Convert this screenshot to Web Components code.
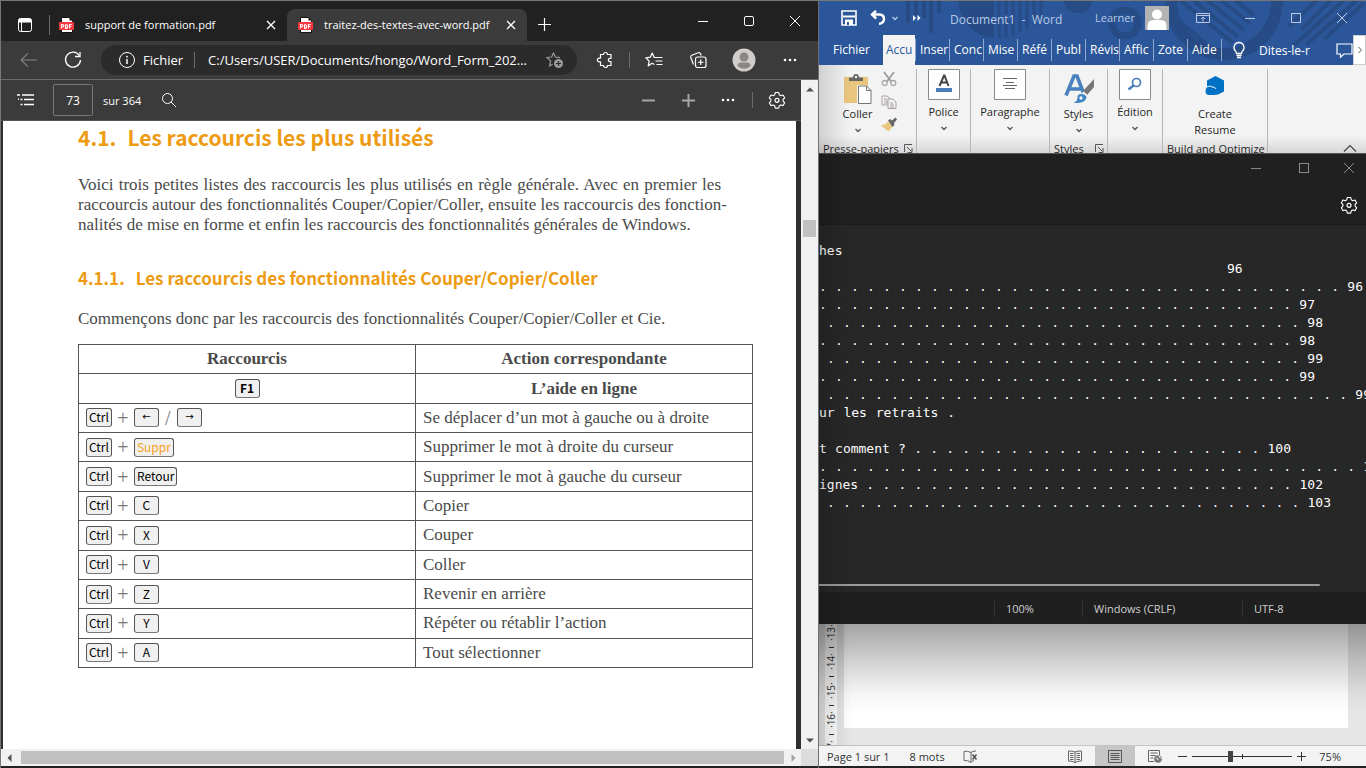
<!DOCTYPE html>
<html lang="fr">
<head>
<meta charset="utf-8">
<title>Bureau</title>
<style>
  body { margin: 0; font-family: "Open Sans", "Noto Sans", sans-serif; font-size: 11px; background: #222; }
</style>
</head>
<body>
<desk-top></desk-top>
<script>
const RESET = `
  * { box-sizing: border-box; }
  button, input { font: inherit; color: inherit; background: none; border: 0; margin: 0; padding: 0; border-radius: 0; }
  button { display: flex; align-items: center; justify-content: center; }
  a { color: inherit; text-decoration: none; }
`;
function define(name, css, html) {
  const template = document.createElement('template');
  template.innerHTML = `<style>${RESET}${css}</style>${html}`;
  customElements.define(name, class extends HTMLElement {
    constructor() {
      super();
      this.attachShadow({ mode: 'open' }).append(template.content.cloneNode(true));
    }
  });
}

/* ---------- icons: name -> [width, height, svg body] ---------- */
const S = 'fill="none" stroke="currentColor"';
const ICONS = {
  tabs: [16, 16, `<rect x="1.5" y="1.5" width="13" height="13" rx="2" ${S}/><path d="M1.500 3a1.500 1.500 0 0 1 1.500-1.500h10a1.500 1.500 0 0 1 1.500 1.500v2.500h-13z" fill="currentColor"/><path d="M4.500 5v9.500" ${S}/>`],
  pdf: [16, 16, `<path d="M2.500.5h8l3 3v12h-11z" fill="#fff" stroke="#111"/><path d="M10.500.5v3h3z" fill="#111"/><rect x="0" y="5" width="15" height="8" rx="1" fill="#f5383f"/><path d="M2.500 11.500v-4h1q1.300 0 1.300 1.200T3.500 10H2.500M6.500 7.500v4q2.200 0 2.200-2T6.500 7.500M10.500 11.500v-4h2.200M10.500 9.500h1.800" fill="none" stroke="#fff" stroke-width="1.100"/>`],
  close: [10, 10, `<path d="M1 1l8 8M9 1l-8 8" ${S} stroke-width="1.300"/>`],
  plus: [15, 15, `<path d="M7.500 1v13M1 7.500h13" ${S} stroke-width="1.200"/>`],
  plusbold: [15, 15, `<path d="M7.500 1v13M1 7.500h13" ${S} stroke-width="2"/>`],
  minusbold: [15, 15, `<path d="M1 7.500h13" ${S} stroke-width="2"/>`],
  min: [12, 12, `<path d="M1 6.500h10" ${S}/>`],
  max: [12, 12, `<rect x="1.500" y="1.500" width="9" height="9" ${S}/>`],
  maxr: [12, 12, `<rect x="1.500" y="1.500" width="9" height="9" rx="1.500" ${S}/>`],
  x: [12, 12, `<path d="M1 1l10 10M11 1L1 11" ${S}/>`],
  back: [18, 16, `<path d="M17 8H1.500M8 1.200L1.200 8 8 14.800" ${S} stroke-width="1.100"/>`],
  refresh: [18, 18, `<path d="M15.300 4.500A7.500 7.500 0 1 0 16.500 9" ${S} stroke-width="1.300"/><path d="M16 1v4.500h-5" ${S} stroke-width="1.300"/>`],
  info: [18, 18, `<circle cx="9" cy="9" r="7.500" ${S}/><path d="M9 8v5" ${S} stroke-width="1.500"/><circle cx="9" cy="5.700" r=".9" fill="currentColor"/>`],
  staradd: [18, 18, `<path d="M7.500 1.800L9.300 6l4.700.6M7.500 1.800L5.700 6 1 6.500l3.600 3.400-1 4.900 3-1.600" ${S} stroke-width="1.200"/><circle cx="12.500" cy="12.500" r="4.500" fill="currentColor"/><path d="M12.500 10v5M10 12.500h5" stroke="#2b2b2b" stroke-width="1.200"/>`],
  puzzle: [18, 18, `<path d="M4.500 3.500h3a2 2 0 0 1 4 0H15v3.800h-1a1.700 1.700 0 0 0 0 3.400h1v3.800h-3.500a2 2 0 0 1-4 0h-3v-3.600H3.300a1.900 1.900 0 0 1 0-3.800h1.200z" ${S} stroke-width="1.200" stroke-linejoin="round"/>`],
  favs: [18, 18, `<path d="M9.500 13.500L7 12.300 3.200 14.900l1-4.800L.8 6.800l4.500-.6L7.200 2l2 4.500h8.300M10.500 10h7M11.500 13.500h6" ${S} stroke-width="1.200" stroke-linejoin="round"/>`],
  collect: [18, 18, `<rect x="6.500" y="6" width="10.500" height="10.500" rx="2" ${S} stroke-width="1.200"/><path d="M11.750 8.500v5.500M9 11.250h5.500M4.500 13.500L1.800 6.500q-.5-1.500 1-2.200l6.500-2.500q1.600-.6 2.200 1L12.300 4.500" ${S} stroke-width="1.200"/>`],
  avatar: [24, 24, `<circle cx="12" cy="12" r="11.500" fill="#cfcdca"/><circle cx="12" cy="9" r="4.500" fill="#8a8785"/><path d="M5.500 18q0-3.500 3.500-3.500h6q3.500 0 3.500 3.500-2.500 2.800-6.500 2.800T5.500 18z" fill="#8a8785"/>`],
  dots: [16, 4, `<circle cx="3" cy="2" r="1.300" fill="currentColor"/><circle cx="8" cy="2" r="1.300" fill="currentColor"/><circle cx="13" cy="2" r="1.300" fill="currentColor"/>`],
  toc: [17, 14, `<path d="M5 2h12M7 6.500h10M7 11.500h10" ${S} stroke-width="1.300"/><path d="M0 2h3M3.500 6.500h2M3.500 11.500h2M1 6h1" ${S} stroke-width="1.600"/>`],
  search: [16, 16, `<circle cx="6.500" cy="6.500" r="5" ${S}/><path d="M10 10l5 5" ${S}/>`],
  gear: [18, 18, `<path d="M7.300 1.500h3.400l.6 2.300 1.500.9 2.300-.7 1.600 2.900-1.600 1.600v1.600l1.600 1.700-1.600 2.800-2.300-.6-1.500.8-.6 2.300H7.300l-.6-2.300-1.500-.8-2.300.6L1.300 11.800l1.600-1.700V8.500L1.300 6.900 2.900 4l2.300.7 1.500-.9z" ${S} stroke-width="1.100" stroke-linejoin="round"/><circle cx="9" cy="9.300" r="2" ${S} stroke-width="1.200"/>`],
  up: [8, 5, `<path d="M0 4.500L4 .5l4 4z" fill="currentColor"/>`],
  down: [8, 5, `<path d="M0 .5l4 4 4-4z" fill="currentColor"/>`],
  left: [5, 8, `<path d="M4.500 0l-4 4 4 4z" fill="currentColor"/>`],
  right: [5, 8, `<path d="M.5 0l4 4-4 4z" fill="currentColor"/>`],
  save: [16, 16, `<path d="M1 1h14v14H1z" fill="none" stroke="#fff" stroke-width="1.600"/><path d="M2 6.500h12" stroke="#fff" stroke-width="2"/><path d="M4 9.500h8V15H4z" fill="#fff"/><path d="M6 12h2v3H6z" fill="#2b579a"/>`],
  undo: [16, 16, `<path d="M2 4.500h7.500q4.500.3 4.500 4.500 0 4-5 5" fill="none" stroke="#fff" stroke-width="2.400"/><path d="M6 .8L2 4.600l4.200 3.900" fill="none" stroke="#fff" stroke-width="2.400"/>`],
  chev: [8, 8, `<path d="M1.500 3L4 5.500 6.500 3" ${S} stroke-width="1.300"/>`],
  more: [8, 6, `<path d="M0 0l3 3-3 3zM4.500 0l3 3-3 3z" fill="#fff"/>`],
  person: [24, 24, `<path d="M0 0h24v24H0z" fill="#b3b3b3"/><circle cx="12" cy="8.500" r="5" fill="#fff"/><path d="M2.500 24v-4q0-6 6-6h7q6 0 6 6v4z" fill="#fff"/>`],
  ribbonopt: [14, 12, `<path d="M.5 1.500h13v9H.5zM.5 3.500h13M7 9.500v-4M5 7l2-2 2 2" ${S}/>`],
  bulb: [14, 18, `<path d="M4.500 12.500q0-1.500-1.500-3A5 5 0 0 1 7 1.500a5 5 0 0 1 4 8q-1.500 1.500-1.500 3zM4.500 14.500h5M5 16.500h4" fill="none" stroke="#fff" stroke-width="1.300"/>`],
  comment: [17, 15, `<path d="M1 1h15v10H8l-3.500 3.200V11H1z" fill="none" stroke="#fff" stroke-width="1.200"/>`],
  next: [6, 8, `<path d="M1.500 1l3 3-3 3" fill="none" stroke="#555"/>`],
  paste: [30, 32, `<path d="M1 4h24v26H1z" fill="#eac57d"/><path d="M6 8V4.500h4Q10 1 13 1t3 3.500h4V8z" fill="#666"/><circle cx="13" cy="4" r="1.200" fill="#f3f3f3"/><path d="M14 12h9l5.500 5.500V32H14z" fill="#f3f3f3"/><path d="M15.500 13h8l4.500 4.500v13H15.500zM23.500 13v4.500H28" fill="#fff" stroke="#767676"/>`],
  cut: [16, 16, `<path d="M3 1l7.500 10M13 1L5.500 11" stroke="#999" stroke-width="1.700"/><circle cx="3.700" cy="12" r="2.500" fill="none" stroke="#aaa" stroke-width="1.300"/><circle cx="12.300" cy="12" r="2.500" fill="none" stroke="#aaa" stroke-width="1.300"/>`],
  copy: [16, 14, `<path d="M1 1h5l3 2.500V10H1zM3 4h3M3 6h4M3 8h4" fill="#f3f3f3" stroke="#aaa3aa"/><path d="M7 4h5l3 3v6.500H7zM9 8h3M9 10h4M9 12h4" fill="#f3f3f3" stroke="#a79fa7"/>`],
  brush: [16, 15, `<path d="M7 4.500l4.500 5L7.500 14.500 0 8.500 4.500 7z" fill="#eac57d"/><path d="M7 3.500l2-1.500 2 1.500L14.500.5 16 2.500 13 6l.5 2-2 2z" fill="#666"/>`],
  police: [32, 31, `<path d="M.5.5h31v30H.5z" fill="#fff" stroke="#8a8a8a"/><path d="M11.500 17L16 6.500h.5L20.500 17M13 13.500h6.500" fill="none" stroke="#444" stroke-width="2"/><path d="M8 19h16v4H8z" fill="#4a7ebb"/>`],
  para: [32, 31, `<path d="M.5.5h31v30H.5z" fill="#fff" stroke="#8a8a8a"/><path d="M9 9.500h14M12 13.500h8M9 16.500h14M11 19.500h10" stroke="#666"/>`],
  styles: [30, 32, `<path d="M2 22.500L10 3h3l6.500 17M6 16h11" fill="none" stroke="#4a82bf" stroke-width="3.600"/><path d="M30 6v8l-7 8-4-4z" fill="#777"/><path d="M19.500 18.500l3.500 3-3 3-3.500-3z" fill="#f3f3f3"/><path d="M17 21q5 0 5.500 3.500-1 6-13 5.500 4-2 4-5.500T17 21z" fill="#3e83c4"/><circle cx="17" cy="25" r="1.700" fill="#f3f3f3"/>`],
  edition: [32, 31, `<path d="M.5.5h31v30H.5z" fill="#fff" stroke="#8a8a8a"/><circle cx="17.500" cy="13.500" r="4" fill="none" stroke="#4a7ebb" stroke-width="1.700"/><path d="M14.500 16.500L9.500 20.500" stroke="#4a7ebb" stroke-width="2.400"/>`],
  resume: [20, 24, `<path d="M10.500 3L19 7.500v11L13 21.500 9 22H3.500Q.5 21.500.5 18.500T2 14V7.500z" fill="#0072c6"/><path d="M2 14q3-2 5 0 3-.5 4 2" fill="none" stroke="#f3f3f3"/>`],
  launch: [9, 9, `<path d="M.5 8V.5H8M3 3l4.500 4.500M8 4v4.500H3.500" fill="none" stroke="#555"/>`],
  fold: [14, 8, `<path d="M1 7.500l6-6 6 6" fill="none" stroke="#444" stroke-width="1.200"/>`],
  proof: [16, 13, `<path d="M8 12.500V2.500Q4 .5 1 1.500v9q4-.5 7 2M8 2.500q1.500-1.500 5-1.500M8 12.500q1-1.500 3-2" fill="none" stroke="#666"/><path d="M9.500 4.500l4 5M13.500 4.500l-4 5" stroke="#555" stroke-width="1.600"/>`],
  read: [14, 13, `<path d="M7 12.500V2Q4 .8.5 1v10q4 0 6.500 1.500Q9.500 11 13.500 11V1Q10 .8 7 2M2 3.500h3.500M2 5.500h3.500M2 7.500h3.500M2 9.500h3.500M8.500 3.500H12M8.500 5.500H12M8.500 7.500H12M8.500 9.500H12" fill="none" stroke="#666"/>`],
  print: [14, 13, `<path d="M.5.5h13v12H.5zM2.500 3.500h9M2.500 5.500h9M2.500 7.500h9M2.500 9.500h9" fill="none" stroke="#555"/>`],
  web: [14, 13, `<path d="M6 11.500H.5V.5h11V5M2.500 3h7M2.500 5.500h5M2.500 8h3" fill="none" stroke="#666"/><circle cx="10" cy="9" r="3.800" fill="#777"/><path d="M8 8q2 0 2 2M11 6q0 2 2 2" stroke="#f3f3f3" fill="none"/>`],
};
customElements.define('ui-icon', class extends HTMLElement {
  connectedCallback() {
    if (this.shadowRoot) return;
    const [w, h, body] = ICONS[this.getAttribute('name')];
    this.attachShadow({ mode: 'open' }).innerHTML =
      `<style>:host{display:inline-flex;flex:none}svg{display:block}</style>
       <svg width="${w}" height="${h}" viewBox="0 0 ${w} ${h}" aria-hidden="true">${body}</svg>`;
  }
});

/* ---------- PDF browser ---------- */
define('browser-tabs', `
  :host { display: flex; height: 40px; background: #212121; color: #fff; }
  .space { width: 48px; padding-left: 16px; display: flex; align-items: center; justify-content: flex-start; padding-top: 8px; }
  .tab { display: flex; align-items: center; height: 32px; margin-top: 8px; gap: 10px; padding: 0 11px; }
  .tab a { flex: 1; white-space: nowrap; line-height: 20px; }
  .first { width: 238px; }
  .first::before { content: ""; width: 1px; height: 20px; background: #6b6b6b; margin: 0 -1px 0 -11px; }
  .active { width: 240px; background: #3b3b3b; border-radius: 8px 8px 0 0; }
  .add { width: 34px; padding-top: 6px; }
  .win { margin-left: auto; display: flex; }
  .win button { width: 46px; }
`, `
  <button class="space" aria-label="Espaces de travail"><ui-icon name="tabs"></ui-icon></button>
  <div class="tab first"><ui-icon name="pdf"></ui-icon><a href="#">support de formation.pdf</a><button aria-label="Fermer"><ui-icon name="close"></ui-icon></button></div>
  <div class="tab active"><ui-icon name="pdf"></ui-icon><a href="#">traitez-des-textes-avec-word.pdf</a><button aria-label="Fermer"><ui-icon name="close"></ui-icon></button></div>
  <button class="add" aria-label="Nouvel onglet"><ui-icon name="plus"></ui-icon></button>
  <div class="win"><button aria-label="Réduire"><ui-icon name="min"></ui-icon></button><button aria-label="Agrandir"><ui-icon name="maxr"></ui-icon></button><button aria-label="Fermer la fenêtre"><ui-icon name="x"></ui-icon></button></div>
`);

define('address-bar', `
  :host { display: flex; align-items: center; height: 39px; background: #3b3b3b; border-bottom: 1px solid #6b6b6b; color: #fff; padding: 0 6px; }
  button { width: 44px; height: 30px; }
  .back { color: #858585; }
  .pill { flex: 1; height: 30px; margin: 0 6px; border-radius: 15px; background: #2b2b2b; display: flex; align-items: center; padding: 0 13px 0 17px; font-size: 13px; }
  label { padding: 0 11px 0 7px; border-right: 1px solid #6b6b6b; line-height: 16px; }
  input { flex: 1; min-width: 0; padding-left: 13px; outline: 0; }
  .staradd { color: #9a9a9a; width: 18px; }
  .profile { width: 48px; }
  i { width: 1px; height: 16px; background: #6b6b6b; margin: 0 2px; }
`, `
  <button class="back" aria-label="Précédent"><ui-icon name="back"></ui-icon></button>
  <button aria-label="Actualiser"><ui-icon name="refresh"></ui-icon></button>
  <div class="pill"><ui-icon name="info"></ui-icon><label for="url">Fichier</label><input id="url" value="C:/Users/USER/Documents/hongo/Word_Form_202..."><button class="staradd" aria-label="Ajouter aux favoris"><ui-icon name="staradd"></ui-icon></button></div>
  <button aria-label="Extensions"><ui-icon name="puzzle"></ui-icon></button><i></i>
  <button aria-label="Favoris"><ui-icon name="favs"></ui-icon></button>
  <button aria-label="Collections"><ui-icon name="collect"></ui-icon></button>
  <button class="profile" aria-label="Profil"><ui-icon name="avatar"></ui-icon></button>
  <button aria-label="Paramètres et plus"><ui-icon name="dots"></ui-icon></button>
`);

define('pdf-toolbar', `
  :host { display: flex; align-items: center; height: 41px; background: #3b3b3b; border-bottom: 1px solid #555; color: #fff; padding: 0 4px; font-size: 12px; }
  button { width: 40px; height: 32px; }
  input { width: 40px; height: 32px; border: 1px solid #777; border-radius: 2px; text-align: center; margin: 0 10px 0 8px; }
  label { font-size: 11px; }
  .find { margin-left: 8px; }
  .right { margin-left: auto; display: flex; align-items: center; }
  .zoom { color: #a5a5a5; }
  i { width: 1px; height: 16px; background: #6b6b6b; margin: 0 4px; }
`, `
  <button aria-label="Sommaire"><ui-icon name="toc"></ui-icon></button>
  <input id="page" value="73" aria-label="Page"><label for="page">sur 364</label>
  <button class="find" aria-label="Rechercher"><ui-icon name="search"></ui-icon></button>
  <div class="right">
    <button class="zoom" aria-label="Zoom arrière"><ui-icon name="minusbold"></ui-icon></button>
    <button class="zoom" aria-label="Zoom avant"><ui-icon name="plusbold"></ui-icon></button>
    <button aria-label="Plus"><ui-icon name="dots"></ui-icon></button><i></i>
    <button aria-label="Paramètres"><ui-icon name="gear"></ui-icon></button>
  </div>
`);

define('key-cap', `
  :host { display: inline-flex; align-items: center; justify-content: center; min-width: 25px; height: 19px; padding: 0 2px 2px; border: 1px solid #555; border-bottom-color: #777; border-radius: 3px; background: #f0f0f0; color: #000; font: 12px/15px "Noto Sans CJK SC", sans-serif; vertical-align: middle; }
  :host([strong]) { font-weight: 700; }
  :host([hot]) { color: #f9a01b; }
  :host([arrow]) { font: 10px/15px "DejaVu Sans", sans-serif; }
`, `<slot></slot>`);

const KEY_ROWS = [
  ['<key-cap>Ctrl</key-cap><b>+</b><key-cap arrow>←</key-cap><b>/</b><key-cap arrow>→</key-cap>', 'Se déplacer d’un mot à gauche ou à droite'],
  ['<key-cap>Ctrl</key-cap><b>+</b><key-cap hot>Suppr</key-cap>', 'Supprimer le mot à droite du curseur'],
  ['<key-cap>Ctrl</key-cap><b>+</b><key-cap>Retour</key-cap>', 'Supprimer le mot à gauche du curseur'],
  ...[['C', 'Copier'], ['X', 'Couper'], ['V', 'Coller'], ['Z', 'Revenir en arrière'], ['Y', 'Répéter ou rétablir l’action'], ['A', 'Tout sélectionner']]
    .map(([k, t]) => [`<key-cap>Ctrl</key-cap><b>+</b><key-cap>${k}</key-cap>`, t]),
];
define('pdf-page', `
  :host { display: block; background: #fff; color: #4a4a4a; padding: 0 43px 0 75px; font: 17px/20px "Liberation Serif", serif; overflow: hidden; }
  h1, h2 { margin: 0; color: #ed9b12; font-family: "Noto Sans CJK SC", sans-serif; font-weight: 700; display: flex; white-space: nowrap; }
  h1 { font-size: 21px; line-height: 32px; gap: 11px; }
  h2 { font-size: 17px; line-height: 28px; gap: 11px; margin-top: 29px; }
  p { margin: 22px 32px 0 0; text-align: justify; }
  h2 + p { margin-top: 17px; }
  .j { display: block; text-align-last: justify; white-space: nowrap; }
  .l { display: block; }
  table { width: 100%; height: 324px; margin-top: 15px; border-collapse: collapse; table-layout: fixed; }
  th, td { border: 1px solid #555; padding: 0 7px; text-align: left; white-space: nowrap; }
  th { text-align: center; }
  .cap > div { display: flex; justify-content: center; }
  .keys > div { display: flex; align-items: center; }
  .keys b { font-weight: 400; font-size: 20px; width: 22px; text-align: center; color: #777; }
  .keys key-cap + b ~ b { width: 18px; }
`, `
  <h1><span>4.1.</span><span>Les raccourcis les plus utilisés</span></h1>
  <p><span class="j">Voici trois petites listes des raccourcis les plus utilisés en règle générale. Avec en premier les</span>
  <span class="j">raccourcis autour des fonctionnalités Couper/Copier/Coller, ensuite les raccourcis des fonction-</span>
  <span class="l">nalités de mise en forme et enfin les raccourcis des fonctionnalités générales de Windows.</span></p>
  <h2><span>4.1.1.</span><span>Les raccourcis des fonctionnalités Couper/Copier/Coller</span></h2>
  <p>Commençons donc par les raccourcis des fonctionnalités Couper/Copier/Coller et Cie.</p>
  <table>
    <tr><th scope="col">Raccourcis</th><th scope="col">Action correspondante</th></tr>
    <tr><th class="cap"><div><key-cap strong>F1</key-cap></div></th><th>L’aide en ligne</th></tr>
    ${KEY_ROWS.map(([k, t]) => `<tr><td class="keys"><div>${k}</div></td><td>${t}</td></tr>`).join('')}
  </table>
`);

define('edge-window', `
  :host { display: flex; flex-direction: column; border: 1px solid #777; border-width: 1px 1px 0 1px; border-right-color: #707070; min-width: 0; }
  .body { flex: 1; display: flex; min-height: 0; }
  .main { flex: 1; min-width: 0; display: flex; flex-direction: column; background: #2f2f2f; }
  pdf-page { flex: 1; min-height: 0; margin: 0 5px 0 2px; }
  .v { width: 17px; background: #f1f1f1; color: #505050; display: flex; flex-direction: column; align-items: center; padding: 7px 0 6px; }
  .v i { width: 13px; height: 17px; background: #c1c1c1; margin-top: 128px; }
  .v ui-icon:last-child { margin-top: auto; }
  .h { height: 17px; display: flex; background: #f1f1f1; color: #505050; align-items: center; padding-left: 6px; }
  .h i { flex: 1; height: 13px; background: #c1c1c1; margin: 0 7px 0 9px; }
  .h .r { color: #a3a3a3; margin-right: 5px; }
  .h b { width: 17px; height: 17px; background: #dcdcdc; }
  .end { height: 2px; background: #222; }
`, `
  <browser-tabs></browser-tabs><address-bar></address-bar>
  <div class="body">
    <div class="main"><pdf-toolbar></pdf-toolbar><pdf-page></pdf-page></div>
    <div class="v"><ui-icon name="up"></ui-icon><i></i><ui-icon name="down"></ui-icon></div>
  </div>
  <div class="h"><ui-icon name="left"></ui-icon><i></i><ui-icon class="r" name="right"></ui-icon><b></b></div>
  <div class="end"></div>
`);

/* ---------- Word ---------- */
define('word-title', `
  :host { display: block; position: relative; height: 65px; background: #2b579a; color: #fff; overflow: hidden; border-top: 1px solid #777; font-size: 12px; }
  .art { position: absolute; top: 0; left: 0; }
  .bar, nav { position: relative; display: flex; align-items: center; }
  .bar { height: 34px; padding: 0 1px 0 22px; color: #b9cae6; }
  .bar button { flex: none; }
  .undo { margin-left: 13px; } .drop { margin-left: 5px; } .more { margin-left: 14px; }
  .name { margin: 2px auto 0 29px; white-space: pre; }
  .user { margin-right: 10px; line-height: 16px; font-size: 11px; }
  .win { display: flex; } .win button { width: 46px; height: 30px; }
  .opt { margin: 0 17px 0 27px; }
  nav { height: 30px; }
  nav a { width: 34px; height: 22px; line-height: 22px; padding-left: 4px; border-right: 1px solid #8fa9d0; flex: none; white-space: nowrap; }
  nav a.file { width: 64px; padding-left: 14px; border: 0; }
  nav a.on { background: #f3f3f3; color: #2b579a; height: 30px; line-height: 30px; width: 32px; padding-left: 3px; border: 0; }
  nav a.on + a { border-left: 1px solid #8fa9d0; width: 35px; }
  .tell { display: flex; align-items: center; gap: 13px; padding-left: 10px; white-space: nowrap; }
  .end { margin-left: auto; display: flex; align-items: center; }
  .nx { width: 13px; height: 30px; background: #fff; border: 1px solid #ccc; }
`, `
  <svg class="art" width="547" height="64" viewBox="0 0 547 64" aria-hidden="true" fill="none" stroke="#264b85">
    <g stroke-width="4"><path d="M89 0v22M97 0v14M105 0v17M112 0v32M120 0v12"/></g>
    <path d="M139 0q5 34 36 37V0z" fill="#264b85" stroke="none"/><path d="M180 0v37M187 0v36M194 0v34M201 0v31M208 0v28M215 0v24M222 0v16" stroke-width="3"/>
    <path d="M245 0a14 12 0 0 0 28 0z" fill="#264b85" stroke="none"/>
    <circle cx="306" cy="22" r="13" stroke-width="7"/>
    <path d="M352 0a53 53 0 1 0 106 0" stroke-width="12"/>
    <path d="M362 0l52 42M375 0l44 36M389 0l36 29M403 0l28 22M417 0l18 14M347 8l50 44" stroke-width="4"/>
    <path d="M470 25L497 0M482 29L511 0M475 44L524 0M487 44L537 0M505 38L545 2" stroke-width="4"/>
  </svg>
  <div class="bar">
    <button aria-label="Enregistrer"><ui-icon name="save"></ui-icon></button>
    <button class="undo" aria-label="Annuler"><ui-icon name="undo"></ui-icon></button>
    <button class="drop" aria-label="Options d’annulation"><ui-icon name="chev"></ui-icon></button>
    <button class="more" aria-label="Plus de commandes"><ui-icon name="more"></ui-icon></button>
    <span class="name">Document1  -  Word</span>
    <span class="user">Learner</span><ui-icon name="person"></ui-icon>
    <button class="opt" aria-label="Options du ruban"><ui-icon name="ribbonopt"></ui-icon></button>
    <div class="win"><button aria-label="Réduire"><ui-icon name="min"></ui-icon></button><button aria-label="Agrandir"><ui-icon name="max"></ui-icon></button><button aria-label="Fermer"><ui-icon name="x"></ui-icon></button></div>
  </div>
  <nav>
    <a class="file" href="#">Fichier</a><a class="on" href="#">Accu</a>
    ${['Inser', 'Conc', 'Mise', 'Réfé', 'Publ', 'Révis', 'Affic', 'Zote', 'Aide'].map(t => `<a href="#">${t}</a>`).join('')}
    <div class="tell"><ui-icon name="bulb"></ui-icon><span>Dites-le-r</span></div>
    <div class="end"><ui-icon name="comment"></ui-icon><button class="nx" aria-label="Suivant"><ui-icon name="next"></ui-icon></button></div>
  </nav>
`);

define('ribbon-group', `
  :host { display: flex; flex-direction: column; border-right: 1px solid #b5b5b5; margin-top: 4px; height: 84px; flex: none; }
  .tools { height: 75px; display: flex; justify-content: center; }
  .cap { display: flex; justify-content: space-between; align-items: center; line-height: 9px; padding: 0 3px 0 4px; white-space: nowrap; height: 9px; }
`, `<div class="tools"><slot></slot></div><div class="cap"><slot name="caption"></slot></div>`);

define('ribbon-tool', `
  :host { display: flex; }
  button { flex-direction: column; justify-content: flex-start; line-height: 16px; white-space: nowrap; }
  .pic { height: 32px; display: flex; align-items: flex-start; }
  :host([tall]) .pic { height: 36px; padding-top: 4px; }
  span.t { padding-top: 3px; }
  :host([tall]) span.t { padding-top: 1px; }
`, `<button><span class="pic"><slot name="icon"></slot></span><span class="t"><slot></slot></span><slot name="arrow"></slot></button>`);

define('word-ribbon', `
  :host { display: flex; height: 88px; background: linear-gradient(#f3f3f3 80%, #d6d6d6); color: #262626; }
  .small { display: flex; flex-direction: column; gap: 8px; padding: 2px 0 0 8px; }
  ribbon-tool { text-align: center; }
  ribbon-tool.paste { margin-left: 4px; }
  ui-icon[slot=arrow] { margin-top: 4px; color: #555; }
  .fold { margin: auto 9px 1px auto; }
`, `
  <ribbon-group style="width:98px">
    <ribbon-tool class="paste" tall><ui-icon slot="icon" name="paste"></ui-icon>Coller<ui-icon slot="arrow" name="chev"></ui-icon></ribbon-tool>
    <div class="small"><ui-icon name="cut"></ui-icon><ui-icon name="copy"></ui-icon><ui-icon name="brush"></ui-icon></div>
    <span slot="caption">Presse-papiers</span><ui-icon slot="caption" name="launch"></ui-icon>
  </ribbon-group>
  <ribbon-group style="width:54px"><ribbon-tool><ui-icon slot="icon" name="police"></ui-icon>Police<ui-icon slot="arrow" name="chev"></ui-icon></ribbon-tool></ribbon-group>
  <ribbon-group style="width:79px"><ribbon-tool><ui-icon slot="icon" name="para"></ui-icon>Paragraphe<ui-icon slot="arrow" name="chev"></ui-icon></ribbon-tool></ribbon-group>
  <ribbon-group style="width:58px"><ribbon-tool tall><ui-icon slot="icon" name="styles"></ui-icon>Styles<ui-icon slot="arrow" name="chev"></ui-icon></ribbon-tool>
    <span slot="caption">Styles</span><ui-icon slot="caption" name="launch"></ui-icon></ribbon-group>
  <ribbon-group style="width:55px"><ribbon-tool><ui-icon slot="icon" name="edition"></ui-icon>Édition<ui-icon slot="arrow" name="chev"></ui-icon></ribbon-tool></ribbon-group>
  <ribbon-group style="width:105px"><ribbon-tool tall><ui-icon slot="icon" name="resume"></ui-icon>Create<br>Resume</ribbon-tool>
    <span slot="caption">Build and Optimize</span></ribbon-group>
  <button class="fold" aria-label="Réduire le ruban"><ui-icon name="fold"></ui-icon></button>
`);

define('word-document', `
  :host { display: flex; height: 100%; min-height: 0; overflow: hidden; position: relative; background: #e6e6e6; border-bottom: 1px solid #c4c4c4; }
  .ruler { width: 12px; margin: 0 7px 0 6px; background: #fdfdfd; color: #333; display: flex; flex-direction: column; font-size: 10px; line-height: 12px; }
  .ruler span { height: 29px; flex: none; display: flex; flex-direction: column; align-items: center; }
  .ruler b { font-weight: 400; height: 18px; writing-mode: vertical-rl; transform: rotate(180deg); text-align: center; }
  .ruler i { width: 5px; height: 1px; background: #333; margin: 5px 0; }
  .page { flex: 1; background: #fff; margin: 0 18px 17px 0; }
  .shade { position: absolute; inset: 0; background: linear-gradient(rgba(0,0,0,.36), rgba(0,0,0,.18) 30%, rgba(0,0,0,.04) 58%, transparent 75%); }
`, `
  <div class="ruler">${[13, 14, 15, 16, 17].map(n => `<span><b>·${n}·</b><i></i></span>`).join('')}</div>
  <div class="page"></div><div class="shade"></div>
`);

define('word-status', `
  :host { display: flex; align-items: center; height: 20px; background: #f3f3f3; color: #333; padding-left: 8px; white-space: nowrap; }
  .words { margin: 0 18px 0 20px; }
  .views { display: flex; margin-left: auto; }
  .views button { width: 40px; height: 20px; } .views .on { background: #c6c6c6; }
  input { appearance: none; width: 100px; height: 15px; margin: 0 2px; background: linear-gradient(#333,#333) 0 7px/100% 1px no-repeat, linear-gradient(#333,#333) 50% 5px/1px 5px no-repeat; }
  input::-webkit-slider-thumb { appearance: none; width: 5px; height: 11px; background: #444; border: 0; }
  .z { width: 15px; height: 15px; }
  output { margin: 0 25px 0 10px; }
`, `
  <span>Page 1 sur 1</span><span class="words">8 mots</span><ui-icon name="proof"></ui-icon>
  <div class="views"><button aria-label="Mode lecture"><ui-icon name="read"></ui-icon></button><button class="on" aria-label="Page"><ui-icon name="print"></ui-icon></button><button aria-label="Mode web"><ui-icon name="web"></ui-icon></button></div>
  <button class="z" aria-label="Zoom arrière"><svg width="9" height="9" aria-hidden="true"><path d="M0 4.500h9" stroke="#333"/></svg></button>
  <input type="range" aria-label="Zoom" min="0" max="100" value="38">
  <button class="z" aria-label="Zoom avant"><svg width="9" height="9" aria-hidden="true"><path d="M4.500 0v9M0 4.500h9" stroke="#333"/></svg></button>
  <output>75%</output>
`);

/* ---------- Notepad ---------- */
const CELL = 8;
const dots = n => Array(n).fill('.').join(' ');
/* [cells to the left of the text, text] */
const LINES = [
  [0, 'hes'], [51, '96'], [0, dots(33) + ' 96'], [0, dots(30) + ' 97'], [1, dots(30) + ' 98'], [0, dots(30) + ' 98'],
  [1, dots(30) + ' 99'], [0, dots(30) + ' 99'], [1, dots(33) + ' 99'], [0, 'ur les retraits .'], [0, ''],
  [0, 't comment ? ' + dots(22) + ' 100'], [0, dots(34) + ' 1'], [0, 'ignes ' + dots(27) + ' 102'], [1, dots(30) + ' 103'],
];
define('note-pad', `
  :host { display: flex; flex-direction: column; height: 471px; background: #272727; color: #fff; border-top: 1px solid #555; box-sizing: border-box; }
  .head { height: 71px; background: #202020; border-bottom: 1px solid #1b1b1b; display: flex; flex-direction: column; align-items: flex-end; }
  .win { display: flex; gap: 8px; color: #8a8a8a; } .win button { width: 40px; height: 28px; } .win button:last-child { width: 34px; }
  .set { width: 34px; height: 40px; margin-top: 3px; }
  .text { flex: 1; min-height: 0; padding-top: 17px; overflow: hidden; font: 13px/18px "DejaVu Sans Mono", monospace; }
  .text div { height: 18px; text-align-last: justify; white-space: nowrap; box-sizing: content-box; }
  .scroll { width: calc(100% - 46px); height: 2px; background: #9a9a9a; border-radius: 0 1px 1px 0; margin-bottom: 6px; }
  .status { height: 32px; padding-top: 2px; background: #1f1f1f; color: #cfcfcf; display: flex; align-items: center; justify-content: flex-end; }
  .status span { border-left: 1px solid #333; line-height: 16px; padding-left: 11px; }
`, `
  <div class="head"><div class="win"><button aria-label="Réduire"><ui-icon name="min"></ui-icon></button><button aria-label="Agrandir"><ui-icon name="max"></ui-icon></button><button aria-label="Fermer"><ui-icon name="x"></ui-icon></button></div>
  <button class="set" aria-label="Paramètres"><ui-icon name="gear"></ui-icon></button></div>
  <div class="text">${LINES.map(([pad, t]) => `<div style="width:${t.length * CELL}px;padding-left:${pad * CELL}px">${t}</div>`).join('')}</div>
  <div class="scroll"></div>
  <div class="status"><span style="width:88px">100%</span><span style="width:160px">Windows (CRLF)</span><span style="width:124px">UTF-8</span></div>
`);

define('word-window', `
  :host { display: flex; flex-direction: column; min-width: 0; position: relative; overflow: hidden; }
  .doc { flex: 1; min-height: 0; }
  .end { height: 2px; background: #222; }
  .shade { position: absolute; top: 65px; bottom: 22px; left: 0; width: 32px; pointer-events: none; background: linear-gradient(90deg, rgba(0,0,0,.14), transparent); }
`, `
  <word-title></word-title><word-ribbon></word-ribbon><note-pad></note-pad>
  <div class="doc"><word-document></word-document></div>
  <word-status></word-status><div class="end"></div><div class="shade"></div>
`);

define('desk-top', `
  :host { display: grid; grid-template-columns: minmax(0, 819fr) minmax(0, 547fr); height: 100vh; min-height: 700px; }
`, `<edge-window></edge-window><word-window></word-window>`);
</script>
</body>
</html>
